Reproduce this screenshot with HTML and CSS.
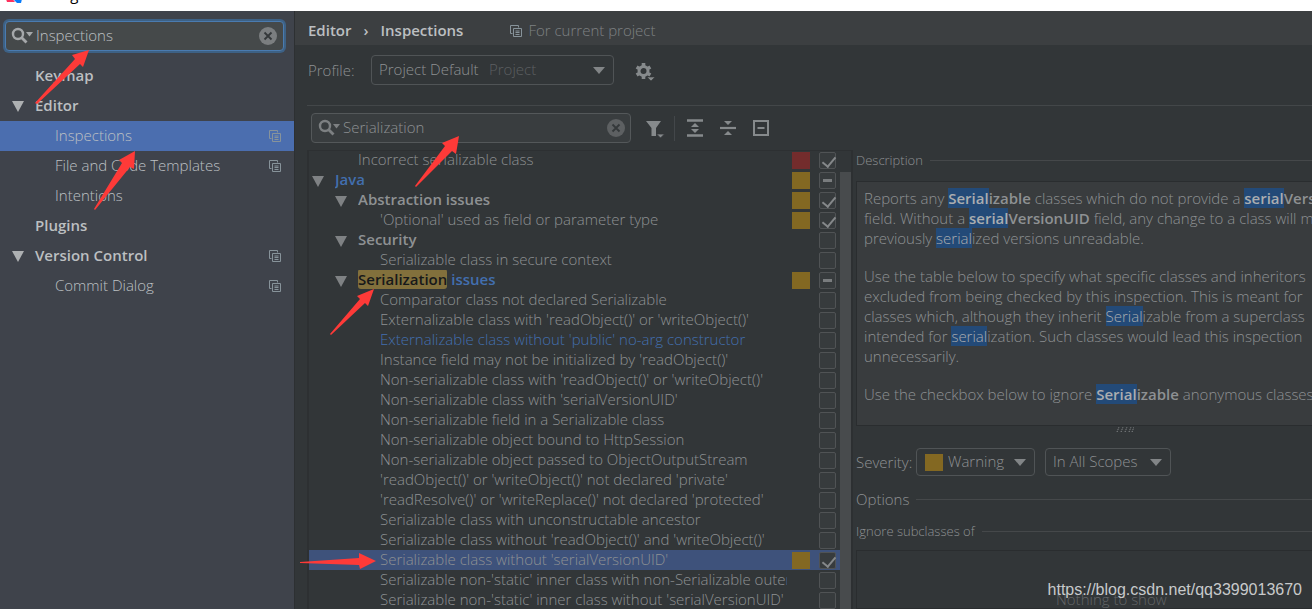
FILE: index.html
```html
<!DOCTYPE html>
<html lang="en">
<head>
<meta charset="utf-8">
<title>Settings</title>
<link rel="stylesheet" href="styles.css">
</head>
<body>
<svg class="defs" aria-hidden="true">
  <symbol id="copy" viewBox="0 0 12 12"><path d="M2.500 8.500h-2v-8h8v2M3.500 3.500h8v8h-8zM5.500 6h4M5.500 7.500h4M5.500 9.500h4" fill="none" stroke="currentColor"/></symbol>
  <symbol id="search" viewBox="0 0 24 18"><circle cx="7" cy="7" r="5" fill="none" stroke="currentColor" stroke-width="2.400"/><path d="M10.500 10.500l5 5" stroke="currentColor" stroke-width="2.800"/><path d="M15 5h7l-3.500 4.500z" fill="currentColor"/></symbol>
  <symbol id="clear" viewBox="0 0 18 18"><circle cx="9" cy="9" r="9" fill="currentColor"/><path d="M5.500 5.500l7 7M12.500 5.500l-7 7" class="cross" stroke-width="1.800"/></symbol>
  <symbol id="tri" viewBox="0 0 12 11"><path d="M0 0h12L6 11z" fill="currentColor"/></symbol>
  <symbol id="down" viewBox="0 0 12 7"><path d="M0 0h12L6 7z" fill="currentColor"/></symbol>
</svg>
<header class="titlebar">
  <svg class="logo" viewBox="0 0 18 18"><path d="M0 14l5-2 4 5H1z" fill="#fe315d"/><path d="M8 15l9-5-2 8-4 0z" fill="#087cfa"/><path d="M5 0h13v10L8 15z" fill="#fc801d"/></svg>
  <span>Settings</span>
</header>
<div class="window">
  <aside class="sidebar">
    <div class="search focused">
      <svg class="icon-search"><use href="#search"/></svg>
      <input type="text" value="Inspections" aria-label="Search settings">
      <button class="clear" aria-label="Clear"><svg><use href="#clear"/></svg></button>
    </div>
    <ul class="nav">
      <li class="top">Keymap</li>
      <li class="top"><svg class="tri"><use href="#tri"/></svg>Editor</li>
      <li class="selected">Inspections<svg class="copy"><use href="#copy"/></svg></li>
      <li>File and Code Templates<svg class="copy"><use href="#copy"/></svg></li>
      <li>Intentions</li>
      <li class="top">Plugins</li>
      <li class="top"><svg class="tri"><use href="#tri"/></svg>Version Control<svg class="copy"><use href="#copy"/></svg></li>
      <li>Commit Dialog<svg class="copy"><use href="#copy"/></svg></li>
    </ul>
  </aside>
  <main class="main">
    <div class="crumbs"><b>Editor</b><span class="chevron">›</span><b>Inspections</b><svg class="copy"><use href="#copy"/></svg><span>For current project</span></div>
    <div class="profile">
      <label for="profile">Profile:</label>
      <div class="combo wide">
        <select id="profile"><option>Project Default</option></select>
        <span class="hint">Project</span>
        <svg class="down"><use href="#down"/></svg>
      </div>
      <button class="tool" aria-label="Profile actions"><svg viewBox="0 0 20 20" width="20" height="20"><circle cx="8.500" cy="9" r="4.500" fill="none" stroke="currentColor" stroke-width="3"/><path d="M8.500 1v3M8.500 14v3M1.600 5l2.600 1.500M12.800 11.500l2.600 1.500M1.600 13l2.600-1.500M12.800 6.500L15.400 5" stroke="currentColor" stroke-width="3.600"/><path d="M12 15h8l-4 4z" fill="currentColor" stroke="#323638" stroke-width=".6"/></svg></button>
    </div>
    <div class="toolbar">
      <div class="search">
        <svg class="icon-search"><use href="#search"/></svg>
        <input type="text" value="Serialization" aria-label="Search inspections">
        <button class="clear" aria-label="Clear"><svg><use href="#clear"/></svg></button>
      </div>
      <button class="tool filter" aria-label="Filter"><svg viewBox="0 0 20 20" width="20" height="20"><path d="M1 2h15l-5 7v8H6.500V9z" fill="currentColor"/><path d="M11.500 15h8l-4 4z" fill="currentColor" stroke="#323638" stroke-width=".8"/></svg></button>
      <span class="divider"></span>
      <button class="tool" aria-label="Expand all"><svg viewBox="0 0 16 18" width="16" height="18"><path d="M0 1.500h16M0 16.500h16" stroke="currentColor" stroke-width="2.400"/><path d="M4 8l4-4 4 4zM4 10h8l-4 4z" fill="currentColor"/></svg></button>
      <button class="tool" aria-label="Collapse all"><svg viewBox="0 0 16 18" width="16" height="18"><path d="M0 9h16" stroke="currentColor" stroke-width="2.200"/><path d="M4 2h8L8 6zM4 16h8l-4-4z" fill="currentColor"/></svg></button>
      <button class="tool" aria-label="Reset"><svg viewBox="0 0 16 16" width="16" height="16"><path d="M1 1h14v14H1zM4.500 8h7" fill="none" stroke="currentColor" stroke-width="2"/></svg></button>
    </div>
    <div class="split">
      <section class="list">
        <div class="rows">
          <label class="row leaf2"><span>Incorrect serializable class</span><i class="swatch error"></i><input type="checkbox" checked></label>
          <label class="row group1 blue"><svg class="tri"><use href="#tri"/></svg><span>Java</span><i class="swatch"></i><input type="checkbox" class="partial"></label>
          <label class="row group2"><svg class="tri"><use href="#tri"/></svg><span>Abstraction issues</span><i class="swatch"></i><input type="checkbox" checked></label>
          <label class="row"><span>'Optional' used as field or parameter type</span><i class="swatch"></i><input type="checkbox" checked></label>
          <label class="row group2"><svg class="tri"><use href="#tri"/></svg><span>Security</span><input type="checkbox"></label>
          <label class="row"><span>Serializable class in secure context</span><input type="checkbox"></label>
          <label class="row group2 blue"><svg class="tri"><use href="#tri"/></svg><span><mark class="match">Serialization</mark> issues</span><i class="swatch"></i><input type="checkbox" class="partial"></label>
          <label class="row"><span>Comparator class not declared Serializable</span><input type="checkbox"></label>
          <label class="row"><span>Externalizable class with 'readObject()' or 'writeObject()'</span><input type="checkbox"></label>
          <label class="row blue"><span>Externalizable class without 'public' no-arg constructor</span><input type="checkbox"></label>
          <label class="row"><span>Instance field may not be initialized by 'readObject()'</span><input type="checkbox"></label>
          <label class="row"><span>Non-serializable class with 'readObject()' or 'writeObject()'</span><input type="checkbox"></label>
          <label class="row"><span>Non-serializable class with 'serialVersionUID'</span><input type="checkbox"></label>
          <label class="row"><span>Non-serializable field in a Serializable class</span><input type="checkbox"></label>
          <label class="row"><span>Non-serializable object bound to HttpSession</span><input type="checkbox"></label>
          <label class="row"><span>Non-serializable object passed to ObjectOutputStream</span><input type="checkbox"></label>
          <label class="row"><span>'readObject()' or 'writeObject()' not declared 'private'</span><input type="checkbox"></label>
          <label class="row"><span>'readResolve()' or 'writeReplace()' not declared 'protected'</span><input type="checkbox"></label>
          <label class="row"><span>Serializable class with unconstructable ancestor</span><input type="checkbox"></label>
          <label class="row"><span>Serializable class without 'readObject()' and 'writeObject()'</span><input type="checkbox"></label>
          <label class="row selected"><span>Serializable class without 'serialVersionUID'</span><i class="swatch"></i><input type="checkbox" checked></label>
          <label class="row"><span>Serializable non-'static' inner class with non-Serializable outer class</span><input type="checkbox"></label>
          <label class="row"><span>Serializable non-'static' inner class without 'serialVersionUID'</span><input type="checkbox"></label>
        </div>
        <div class="scroll"></div>
      </section>
      <section class="details">
        <h2 class="small">Description</h2>
        <div class="description">
          <p>Reports any <b><mark>Serial</mark>izable</b> classes which do not provide a <b><mark>serial</mark>VersionUID</b><br>
          field. Without a <b><mark>serial</mark>VersionUID</b> field, any change to a class will make<br>
          previously <mark>serial</mark>ized versions unreadable.</p>
          <p>Use the table below to specify what specific classes and inheritors<br>
          excluded from being checked by this inspection. This is meant for<br>
          classes which, although they inherit <mark>Serial</mark>izable from a superclass<br>
          intended for <mark>serial</mark>ization. Such classes would lead this inspection<br>
          unnecessarily.</p>
          <p>Use the checkbox below to ignore <b><mark>Serial</mark>izable</b> anonymous classes.</p>
        </div>
        <svg class="grip" viewBox="0 0 18 5"><path d="M1 5l2-5M5 5l2-5M9 5l2-5M13 5l2-5M16 5l2-5" stroke="currentColor" stroke-dasharray="1 1"/></svg>
        <div class="severity">
          <label for="severity">Severity:</label>
          <div class="combo warn"><i class="swatch"></i><select id="severity"><option>Warning</option></select><svg class="down"><use href="#down"/></svg></div>
          <div class="combo scope"><select aria-label="Scope"><option>In All Scopes</option></select><svg class="down"><use href="#down"/></svg></div>
        </div>
        <h2 class="options">Options</h2>
        <h2 class="small ignore">Ignore subclasses of</h2>
        <div class="empty">Nothing to show</div>
      </section>
    </div>
  </main>
</div>
<svg class="arrows" width="480" height="600" viewBox="0 0 480 600" aria-hidden="true">
  <path d="M35 103L75 59l-3-4 17-5-6 17-3-3-43 40zM94 209l28-46-3-3 16-9-1 18-4-2-35 43zM415 186l30-40-3-3 17-7-3 18-4-3-36 36zM330 334l30-35-3-3 17-7-6 17-3-3-34 32zM300 562l59-4v-5l17 8-16 8-1-4-59-2z"/>
</svg>
<div class="watermark">https://blog.csdn.net/qq3399013670</div>
</body>
</html>
```
FILE: styles.css
```css
* { box-sizing: border-box; }
body {
  margin: 0;
  height: 100vh;
  overflow: hidden;
  display: flex;
  flex-direction: column;
  background: #323638;
  color: #8e9193;
  font: 300 15px/20px "Open Sans", "Noto Sans", sans-serif;
}
b { font-weight: 600; }
button, input, select { font: inherit; color: inherit; margin: 0; padding: 0; border: 0; background: none; appearance: none; outline: 0; }
svg { flex: none; display: block; }
.defs { position: absolute; width: 0; height: 0; }
.titlebar {
  height: 11px;
  flex: none;
  padding: 0 6px 7px;
  display: flex;
  align-items: flex-end;
  gap: 6px;
  overflow: hidden;
  background: #fff;
  color: #000;
  font-weight: 400;
}
.logo { width: 18px; height: 18px; margin-bottom: 1px; }
.window { flex: 1; min-height: 0; display: flex; }

.sidebar { width: 294px; flex: none; padding-top: 10px; background: #3f434b; color: #bdc0c3; }
.search {
  display: flex;
  align-items: center;
  height: 30px;
  border: 1px solid #54585a;
  border-radius: 4px;
  background: #393d3f;
  padding: 0 6px;
}
.search input { flex: 1; min-width: 0; height: 24px; padding-bottom: 2px; }
.search.focused { margin: 0 10px 0 5px; padding: 0 6px 0 5px; border-color: #4a7bb0; background: #45494a; box-shadow: 0 0 0 2px #3d6185; }
.icon-search { width: 24px; height: 18px; margin-right: 1px; color: #7d8082; }
.focused .icon-search { color: #a5a8aa; }
.clear, .clear svg { width: 18px; height: 18px; color: #5d6062; }
.focused .clear svg { color: #7b7e80; }
.cross { stroke: #34383a; }
.nav { list-style: none; margin: 10px 0 0; padding: 0; }
.nav li { display: flex; align-items: center; height: 30px; padding: 0 13px 3px 55px; }
.nav .top { padding-left: 35px; font-weight: 600; color: #bcbfc1; }
.nav .selected { background: #4b6eaf; }
.copy { width: 12px; height: 12px; color: #87939a; }
.nav .copy { margin: 3px 0 0 auto; }
.tri { width: 12px; height: 11px; color: #7f8284; }
.nav .tri { margin: 4px 11px 0 -23px; color: #adb0b2; }

.main { flex: 1; min-width: 0; display: flex; flex-direction: column; border-left: 1px solid #2d3032; }
.crumbs { display: flex; align-items: center; flex: none; height: 34px; padding: 3px 13px 0; background: #3c3f41; color: #7e8183; }
.crumbs b { color: #bcbfc1; }
.crumbs .chevron { width: 29px; text-align: center; color: #bcbfc1; font-weight: 600; }
.crumbs .copy { margin: 3px 6px 0 47px; }
.profile { display: flex; align-items: center; height: 60px; flex: none; padding: 0 0 10px 13px; }
.profile label { width: 63px; }
.combo { display: grid; align-items: center; border: 1px solid #505456; border-radius: 4px; }
.combo > * { grid-row: 1; grid-column: 1; }
.combo select { width: 100%; height: 28px; padding: 0 0 2px 7px; }
.combo .down { justify-self: end; width: 12px; height: 7px; margin-right: 8px; pointer-events: none; color: #828587; }
.wide { width: 243px; height: 30px; }
.hint { padding: 0 0 2px 117px; color: #5c5f61; pointer-events: none; }
.tool { color: #868a8c; flex: none; }
.profile .tool { margin: 4px 0 0 21px; }
.toolbar { display: flex; align-items: center; flex: none; height: 45px; margin-left: 12px; padding: 0 0 0 4px; border-top: 1px solid #434749; }
.toolbar .search { width: 320px; padding-right: 5px; }
.toolbar .tool { margin-right: 17px; }
.toolbar .filter { margin: 2px 9px 0 14px; }
.divider { width: 1px; height: 25px; margin-right: 12px; background: #43474a; }

.split { flex: 1; min-height: 0; display: flex; margin-left: 12px; }
.list { width: 546px; flex: none; display: flex; border: 2px solid #2d3032; border-width: 1px 2px 0; overflow: hidden; }
.rows { flex: 1; min-width: 0; margin-top: -1px; }
.row { display: flex; align-items: center; height: 20px; padding: 0 4px 0 71px; }
.row span { flex: 1; min-width: 0; overflow: hidden; white-space: nowrap; margin-right: 5px; height: 20px; line-height: 18px; }
.row span:has(+ input) { margin-right: 32px; }
.leaf2 { padding-left: 49px; }
.group1 { padding-left: 3px; font-weight: 600; }
.group2 { padding-left: 26px; font-weight: 600; }
.row .tri { margin: 3px 11px 0 0; }
.blue { color: #426faf; }
.row.selected { background: #3e527b; }
.match { background: #82703c; color: #17191a; border-radius: 3px; }
.swatch { display: block; width: 18px; height: 17px; margin-right: 9px; background: #836822; }
.error { background: #732c2c; }
.row input { position: relative; width: 17px; height: 17px; border: 1px solid #505355; border-radius: 2px; background: #373b3d; }
.row input:checked::after { content: ""; position: absolute; left: 5px; top: 1px; width: 6px; height: 11px; border: solid #85888a; border-width: 0 2px 2px 0; transform: rotate(40deg); }
.partial::after { content: ""; position: absolute; left: 3px; top: 6px; width: 9px; height: 3px; background: #797c7e; }
.scroll { width: 11px; margin-top: 21px; background: #484b4d; }

.details { flex: 1; min-width: 0; display: flex; flex-direction: column; padding-left: 3px; overflow: hidden; }
h2 { display: flex; align-items: center; gap: 7px; margin: 0; font-size: 15px; font-weight: 300; line-height: 20px; white-space: nowrap; }
h2::after { content: ""; flex: 1; height: 1px; background: #45484a; }
.small { font-size: 13px; }
.description { height: 245px; flex: none; margin-top: 11px; padding: 6px 7px; border: 1px solid #2a2d2f; border-right: 0; background: #393c3e; white-space: nowrap; overflow: hidden; }
.description p { margin: 0 0 18px; }
.description mark { background: #234a78; color: #aaadb0; }
.grip { width: 18px; height: 5px; margin: 1px 0 0 260px; }
.severity { display: flex; align-items: center; height: 28px; margin-top: 16px; }
.severity label { width: 60px; }
.severity .combo select { height: 26px; }
.warn { width: 119px; margin-right: 10px; }
.severity .warn select { padding-left: 31px; }
.warn .swatch { margin: 0 0 0 8px; }
.scope { width: 126px; }
.options { margin-top: 13px; }
.ignore { margin-top: 12px; }
.empty { flex: 1; min-height: 0; margin-top: 9px; padding: 38px 0 0 199px; border: 1px solid #2a2d2f; border-right: 0; color: #626567; white-space: nowrap; overflow: hidden; }

.arrows { position: absolute; left: 0; top: 0; fill: #fe3a38; pointer-events: none; }
.watermark { position: absolute; right: 10px; bottom: 9px; color: #c8cacb; font: 400 16px/20px "Liberation Sans", Arial, sans-serif; }
```
